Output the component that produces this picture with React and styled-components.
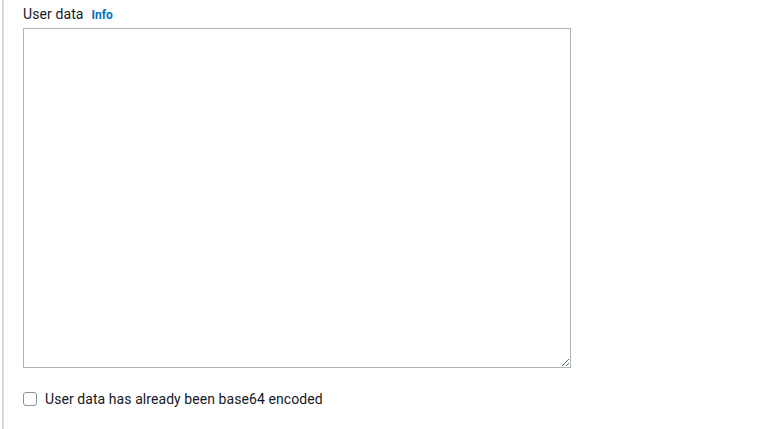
import React from 'react'
import styled, { createGlobalStyle } from 'styled-components'

const Global = createGlobalStyle`
  html, body {
    margin: 0;
    padding: 0;
    background: #ffffff;
  }
  body {
    font-family: Roboto, "Noto Sans", Arial, sans-serif;
    color: #16191f;
  }
`

const Page = styled.div`
  width: 780px;
  height: 429px;
  box-sizing: border-box;
  padding-left: 2px;
  overflow: hidden;
`

const Panel = styled.div`
  height: 100%;
  border-left: 2px solid #d5dbdb;
  padding: 5px 0 0 19px;
  box-sizing: border-box;
`

const LabelRow = styled.div`
  display: flex;
  align-items: baseline;
  gap: 8px;
  height: 18px;
  margin-bottom: 5px;
`

const Label = styled.label`
  font-size: 14px;
  font-weight: 400;
  letter-spacing: 0.1px;
  color: #16191f;
  line-height: 18px;
`

const InfoLink = styled.a`
  font-size: 12px;
  font-weight: 700;
  color: #0073bb;
  text-decoration: none;
  cursor: pointer;
`

const TextArea = styled.textarea`
  display: block;
  width: 548px;
  height: 340px;
  box-sizing: border-box;
  margin: 0;
  border: 1px solid #aab7b8;
  border-radius: 0;
  padding: 4px 8px;
  font-family: inherit;
  font-size: 14px;
  resize: both;
  outline: none;
`

const CheckRow = styled.label`
  display: flex;
  align-items: center;
  gap: 8px;
  margin-top: 23px;
  font-size: 14px;
  letter-spacing: 0.07px;
  color: #16191f;
  cursor: pointer;
`

const Box = styled.span`
  width: 14px;
  height: 14px;
  box-sizing: border-box;
  border: 1px solid #879596;
  border-radius: 3px;
  background: #fff;
`

export default function App() {
  return (
    <>
      <Global />
      <Page>
        <Panel>
          <LabelRow>
            <Label>User data</Label>
            <InfoLink>Info</InfoLink>
          </LabelRow>
          <TextArea />
          <CheckRow>
            <Box />
            <span>User data has already been base64 encoded</span>
          </CheckRow>
        </Panel>
      </Page>
    </>
  )
}
